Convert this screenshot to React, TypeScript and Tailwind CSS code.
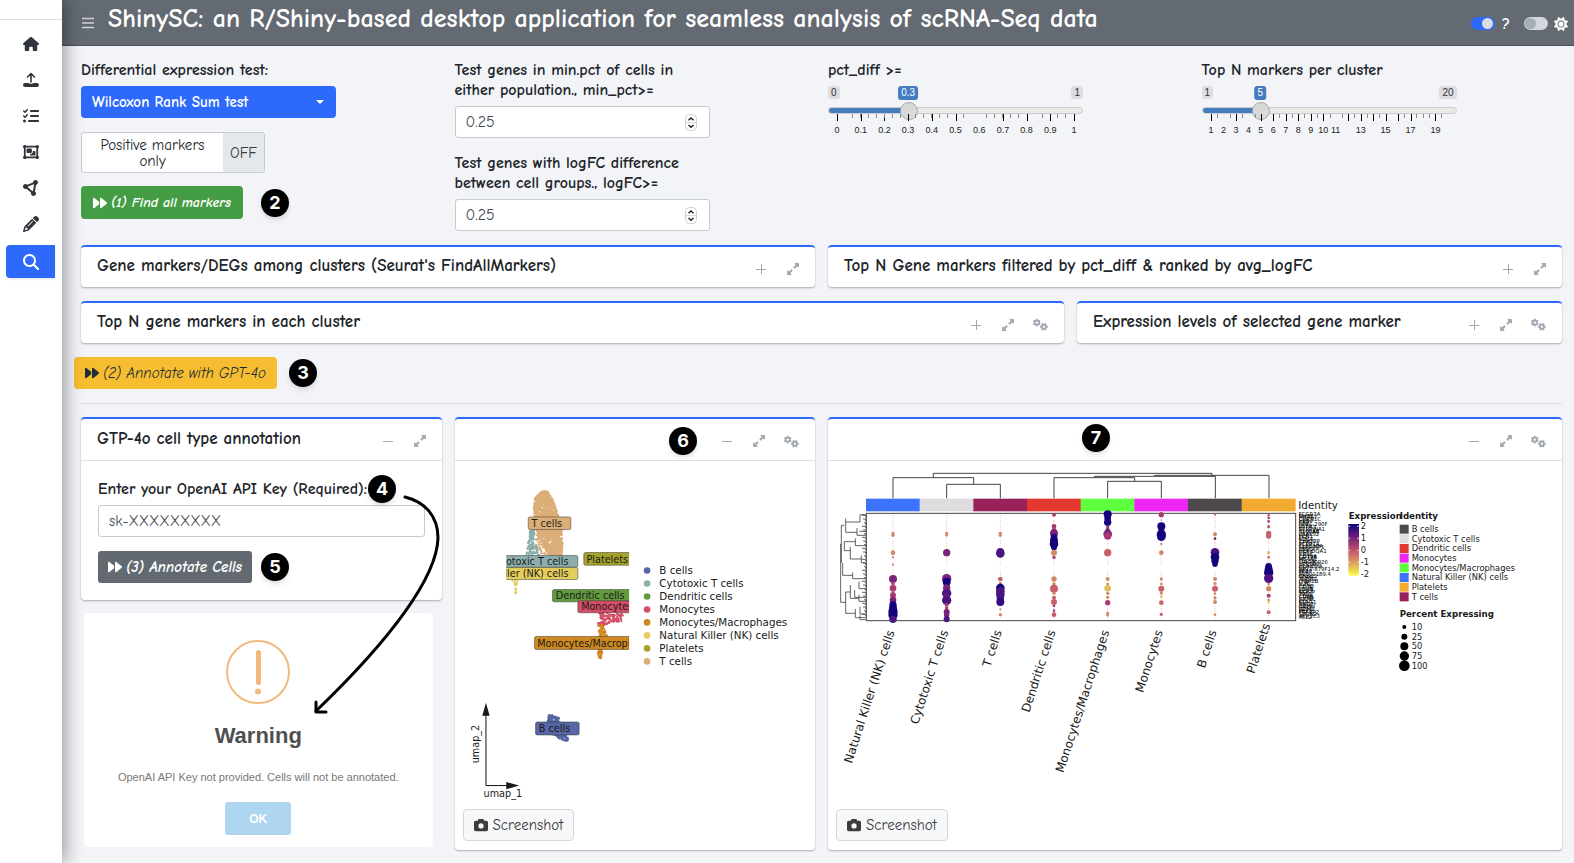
import type { ReactNode } from "react";
import {
  FaCamera,
  FaCircleNodes,
  FaForward,
  FaGears,
  FaHouse,
  FaListCheck,
  FaMagnifyingGlass,
  FaObjectGroup,
  FaPencil,
  FaSun,
  FaUpRightAndDownLeftFromCenter,
} from "react-icons/fa6";

const plotFont = '"DejaVu Sans", Verdana, sans-serif';

function UploadIcon() {
  return (
    <svg viewBox="0 0 16 16" className="size-4" fill="none" stroke="currentColor" aria-hidden>
      <path d="M8 10V2M4.500 5 8 1.500l3.500 3.500" strokeWidth="1.600" strokeLinecap="round" strokeLinejoin="round" />
      <path d="M2 11h4.200v.8h3.600V11H14a1.500 1.500 0 0 1 0 4H2a1.500 1.500 0 0 1 0-4Z" fill="currentColor" stroke="none" />
    </svg>
  );
}

const navItems = [
  { label: "Home", icon: <FaHouse /> },
  { label: "Upload", icon: <UploadIcon /> },
  { label: "Quality control", icon: <FaListCheck /> },
  { label: "Clustering", icon: <FaObjectGroup /> },
  { label: "Network", icon: <FaCircleNodes /> },
  { label: "Edit", icon: <FaPencil /> },
  { label: "Markers", icon: <FaMagnifyingGlass />, active: true },
];

function Sidebar() {
  return (
    <aside className="relative z-10 w-[62px] shrink-0 bg-white shadow-[4px_0_16px_rgba(0,0,0,0.35)]">
      <div className="h-5 border-b border-[#dcdfe3]" />
      <nav className="mt-2 flex flex-col gap-1 pr-[7px] pl-[6px]">
        {navItems.map((item) => (
          <a
            key={item.label}
            href="#"
            aria-label={item.label}
            className={
              item.active
                ? "mt-px flex h-[33px] items-center justify-center rounded-l bg-[#2d69fb] text-white shadow"
                : "flex h-8 items-center justify-center text-[#2f353b]"
            }
          >
            {item.icon}
          </a>
        ))}
      </nav>
    </aside>
  );
}

function Header() {
  return (
    <header className="flex h-[46px] items-center border-b border-[#4c5258] bg-[#636a72] text-white">
      <button aria-label="Toggle menu" className="ml-5">
        <svg viewBox="0 0 12 12" className="size-3" stroke="#cfd2d6" strokeWidth="1.500" aria-hidden>
          <path d="M0 1.500h12M0 6h12M0 10.500h12" />
        </svg>
      </button>
      <h1 className="ml-[14px] pb-2 text-[26px] leading-8 font-bold whitespace-nowrap">
        ShinySC: an R/Shiny-based desktop application for seamless analysis of scRNA-Seq data
      </h1>
      <div className="mt-[2px] mr-[6px] ml-auto flex items-center gap-[6px]">
        <input
          type="checkbox"
          aria-label="Help"
          defaultChecked
          className="h-[13px] w-6 appearance-none rounded-full bg-[#2d69fb] before:ml-[11px] before:block before:size-[11px] before:translate-y-px before:rounded-full before:bg-[#dadde3]"
        />
        <span className="w-[10px] text-center text-base leading-5 font-bold">?</span>
        <input
          type="checkbox"
          aria-label="Dark mode"
          className="ml-[7px] h-[13px] w-6 appearance-none rounded-full bg-[#d3d6da] before:ml-px before:block before:size-[11px] before:translate-y-px before:rounded-full before:bg-[#a7adb7]"
        />
        <FaSun className="size-[14px]" />
      </div>
    </header>
  );
}

function Badge({ children, className = "" }: { children: ReactNode; className?: string }) {
  return (
    <span
      className={`flex size-7 shrink-0 items-center justify-center rounded-full bg-black font-['Inter','Liberation_Sans',sans-serif] text-lg leading-none font-bold text-white shadow-md ${className}`}
    >
      {children}
    </span>
  );
}

function Card({
  title,
  gears,
  open,
  mark,
  className = "",
  children,
}: {
  title?: string;
  gears?: boolean;
  open?: boolean;
  mark?: ReactNode;
  className?: string;
  children?: ReactNode;
}) {
  return (
    <section className={`rounded border-t-2 border-[#2d69fb] bg-white shadow-[0_1px_2px_rgba(0,0,0,0.3)] ${className}`}>
      <div className={open ? "relative flex h-[42px] items-center border-b border-[#dcdee2]" : "flex h-10 items-center"}>
        {title && <h2 className="ml-4 pb-[2px] text-[17px] leading-5 font-bold whitespace-nowrap">{title}</h2>}
        <div className={`ml-auto flex items-center pt-[3px] text-[#a3a9b3] ${gears ? "pr-2" : "pr-[6px]"}`}>
          {mark}
          <button aria-label={open ? "Collapse" : "Expand"} className="flex w-8 justify-center">
            <svg viewBox="0 0 10 10" className="size-[10px]" stroke="currentColor" strokeWidth="1" aria-hidden>
              <path d={open ? "M0 5.500h10" : "M0 5.500h10M5.500 0v10"} />
            </svg>
          </button>
          <button aria-label="Full screen" className="flex w-8 justify-center">
            <FaUpRightAndDownLeftFromCenter className="size-3" />
          </button>
          {gears && (
            <button aria-label="Settings" className="flex w-8 justify-center">
              <FaGears className="size-[15px]" />
            </button>
          )}
        </div>
      </div>
      {children}
    </section>
  );
}

function NumberField({ id, label, value }: { id: string; label: string; value: string }) {
  return (
    <div className="w-[255px]">
      <label htmlFor={id} className="block text-base leading-5 font-bold">
        {label}
      </label>
      <div className="mt-[6px] flex h-8 items-center rounded-[3px] border border-[#c6cbd2] bg-white pr-3 pl-[10px]">
        <input
          id={id}
          type="number"
          step="0.01"
          defaultValue={value}
          className="min-w-0 flex-1 appearance-none text-base text-[#444a52] outline-none [-moz-appearance:textfield] [&::-webkit-inner-spin-button]:appearance-none"
        />
        <svg viewBox="0 0 12 17" className="h-[17px] w-3" fill="none" aria-hidden>
          <rect x=".5" y=".5" width="11" height="16" rx="4" stroke="#cfcfcf" fill="#fff" />
          <path d="M1 8.500h10" stroke="#d8d8d8" />
          <path d="m3.500 6.200 2.500-2.200 2.500 2.200M3.500 11l2.500 2.200 2.500-2.200" stroke="#222" strokeWidth="1.400" />
        </svg>
      </div>
    </div>
  );
}

type Tick = { at: number; label?: string; big?: boolean };

const pctTicks: Tick[] = [
  ...Array.from({ length: 11 }, (_, i) => ({ at: 9 + i * 23.7, label: String(i / 10), big: i !== 6 })),
  ...[24, 32, 40, 48, 56, 64, 72, 87, 95, 103, 111, 119, 135, 158, 166, 174, 182, 190, 214, 229, 237].map((at) => ({ at })),
];

const topTicks: Tick[] = [
  ...Array.from({ length: 19 }, (_, i) => ({
    at: 9 + i * 12.47,
    label: i < 11 || i % 2 === 0 ? String(i + 1) : undefined,
    big: [0, 2, 4, 5, 6, 7, 8, 9, 11, 12, 13, 14, 15, 16, 18].includes(i),
  })),
  ...[15, 28, 40, 53, 77, 90, 102, 115, 128, 140, 152, 165, 177, 202, 214, 227, 239].map((at) => ({ at })),
];

function Slider({
  id,
  label,
  min,
  max,
  step,
  value,
  ticks,
}: {
  id: string;
  label: string;
  min: number;
  max: number;
  step: number;
  value: number;
  ticks: Tick[];
}) {
  // the thumb is 18px wide, so its centre travels over 255 - 18 pixels
  const center = 9 + ((value - min) / (max - min)) * 237;
  return (
    <div className="w-[255px]">
      <label htmlFor={id} className="block text-base leading-5 font-bold">
        {label}
      </label>
      <div className="relative mt-[6px] flex justify-between font-['Liberation_Sans',Arial,sans-serif] text-[10px] leading-[13px] text-[#333]">
        <span className="rounded-[3px] bg-[#dcdde0] px-[3px]">{min}</span>
        <span className="rounded-[3px] bg-[#dcdde0] px-[3px]">{max}</span>
        <span
          className="absolute top-0 -translate-x-1/2 rounded-[3px] bg-[#457cbf] px-[3px] leading-[14px] text-white"
          style={{ left: center }}
        >
          {value}
        </span>
      </div>
      <input
        id={id}
        type="range"
        min={min}
        max={max}
        step={step}
        defaultValue={value}
        style={{ backgroundImage: `linear-gradient(to right, #457cbf ${center}px, #e9e9e7 ${center}px)` }}
        className="mt-2 block h-[7px] w-full appearance-none rounded-full border border-[#cbcbcb] [&::-webkit-slider-thumb]:size-[18px] [&::-webkit-slider-thumb]:appearance-none [&::-webkit-slider-thumb]:rounded-full [&::-webkit-slider-thumb]:border [&::-webkit-slider-thumb]:border-[#aaa] [&::-webkit-slider-thumb]:bg-[#d9d9d9]"
      />
      <svg viewBox="0 0 255 22" className="h-[22px] w-full overflow-visible" aria-hidden>
        {ticks.map((t, i) => (
          <g key={i}>
            <path
              d={`M${Math.round(t.at) + 0.5} 0v${t.big ? 7 : 4}`}
              stroke={t.big ? "#000" : "#888"}
              opacity={t.label && !t.big ? 0 : 1}
            />
            {t.label && (
              <text x={t.at} y="19" textAnchor="middle" fontSize="9" fontFamily='"Liberation Sans", Arial, sans-serif' fill="#222">
                {t.label}
              </text>
            )}
          </g>
        ))}
      </svg>
    </div>
  );
}

function Controls() {
  return (
    <div className="grid grid-cols-4 gap-x-[13px]">
      <div>
        <label htmlFor="test" className="block text-base leading-5 font-bold">
          Differential expression test:
        </label>
        <div className="relative mt-[6px] w-[255px]">
          <select
            id="test"
            className="block h-8 w-full appearance-none rounded bg-[#2d69fb] pl-[11px] text-[15px] font-bold text-white"
          >
            <option>Wilcoxon Rank Sum test</option>
          </select>
          <svg viewBox="0 0 8 4" className="pointer-events-none absolute top-[14px] right-3 h-1 w-2" fill="#fff" aria-hidden>
            <path d="M0 0h8L4 4Z" />
          </svg>
        </div>
        <button
          role="switch"
          aria-checked="false"
          className="mt-[14px] flex h-[41px] w-[184px] overflow-hidden rounded-[3px] border border-[#c6cbd2] bg-white text-[15px] leading-4"
        >
          <span className="flex-1 self-center px-4">Positive markers only</span>
          <span className="flex w-[41px] items-center justify-center self-stretch bg-[#e4e8eb] text-[#333a44]">OFF</span>
        </button>
        <div className="mt-[13px] flex items-center gap-[18px]">
          <button className="flex h-[33px] w-[162px] items-center justify-center gap-1 rounded bg-[#449d44] text-sm font-bold whitespace-nowrap text-white italic">
            <FaForward className="size-[14px]" />
            (1) Find all markers
          </button>
          <Badge>2</Badge>
        </div>
      </div>
      <div className="flex flex-col gap-[15px]">
        <NumberField id="min-pct" label="Test genes in min.pct of cells in either population., min_pct>=" value="0.25" />
        <NumberField id="logfc" label="Test genes with logFC difference between cell groups., logFC>=" value="0.25" />
      </div>
      <Slider id="pct-diff" label="pct_diff >=" min={0} max={1} step={0.1} value={0.3} ticks={pctTicks} />
      <Slider id="top-n" label="Top N markers per cluster" min={1} max={20} step={1} value={5} ticks={topTicks} />
    </div>
  );
}

// Each row is [y, xMin, xMax]; points are spread between neighbouring rows.
type Outline = [number, number, number][];

function scatter(seed: number, count: number, rows: Outline) {
  let s = seed;
  const rand = () => {
    s = (s * 16807) % 2147483647;
    return s / 2147483647;
  };
  const top = rows[0][0];
  const bottom = rows[rows.length - 1][0];
  const points: [number, number][] = [];
  while (points.length < count) {
    const y = top + rand() * (bottom - top);
    const i = Math.max(1, rows.findIndex((r) => r[0] >= y));
    const a = rows[i - 1];
    const b = rows[i];
    const k = (y - a[0]) / (b[0] - a[0]);
    const lo = a[1] + (b[1] - a[1]) * k;
    const hi = a[2] + (b[2] - a[2]) * k;
    points.push([Math.round(lo + rand() * (hi - lo)), Math.round(y)]);
  }
  return points;
}

const clouds: { color: string; count: number; seed: number; rows: Outline }[] = [
  {
    color: "#dbae78",
    count: 1500,
    seed: 11,
    rows: [[245, 276, 294], [262, 254, 304], [290, 250, 316], [320, 251, 326], [360, 258, 334], [400, 276, 338], [436, 297, 335]],
  },
  { color: "#dbae78", count: 40, seed: 5, rows: [[365, 255, 275], [400, 258, 282], [436, 262, 300]] },
  { color: "#8caeac", count: 120, seed: 7, rows: [[360, 241, 252], [390, 233, 254], [415, 231, 262], [436, 228, 266]] },
  { color: "#e5cd5b", count: 18, seed: 3, rows: [[512, 186, 208], [520, 194, 199], [560, 194, 199]] },
  { color: "#d34e66", count: 130, seed: 9, rows: [[610, 446, 521], [634, 445, 517], [640, 444, 478], [648, 445, 458]] },
  { color: "#cf891f", count: 130, seed: 13, rows: [[645, 446, 457], [678, 445, 472], [718, 441, 459], [745, 447, 453]] },
  { color: "#5767a4", count: 260, seed: 17, rows: [[917, 296, 306], [925, 293, 326], [950, 293, 330], [977, 308, 345], [985, 325, 353], [993, 342, 354]] },
];

const umapLabels = [
  { text: "T cells", x: 234, y: 321, w: 128, h: 38, tx: 244, color: "#dbae78" },
  { text: "Cytotoxic T cells", x: 120, y: 437, w: 263, h: 35, tx: 355, end: true, color: "#8caeac" },
  { text: "Natural Killer (NK) cells", x: 100, y: 473, w: 283, h: 36, tx: 355, end: true, color: "#e5cd5b" },
  { text: "Platelets", x: 401, y: 428, w: 160, h: 38, tx: 409, color: "#a6a32a" },
  { text: "Dendritic cells", x: 307, y: 539, w: 240, h: 37, tx: 317, color: "#619b3e" },
  { text: "Monocytes", x: 383, y: 573, w: 180, h: 36, tx: 393, color: "#d34e66" },
  { text: "Monocytes/Macrophages", x: 253, y: 680, w: 400, h: 39, tx: 261, color: "#cf891f" },
  { text: "B cells", x: 256, y: 937, w: 131, h: 39, tx: 266, color: "#5767a4" },
];

const umapLegend = [
  ["B cells", "#5767a4"],
  ["Cytotoxic T cells", "#8caeac"],
  ["Dendritic cells", "#619b3e"],
  ["Monocytes", "#d34e66"],
  ["Monocytes/Macrophages", "#cf891f"],
  ["Natural Killer (NK) cells", "#e5cd5b"],
  ["Platelets", "#a6a32a"],
  ["T cells", "#dbae78"],
];

function UmapPlot() {
  return (
    <svg viewBox="14 153 1083 1020" preserveAspectRatio="xMinYMin meet" className="h-[340px] w-full" fontFamily={plotFont} fill="#1a1a1a">
      <clipPath id="umap-area">
        <rect x="168" y="180" width="369" height="840" />
      </clipPath>
      <g clipPath="url(#umap-area)">
        {clouds.map((cloud) =>
          scatter(cloud.seed, cloud.count, cloud.rows).map(([x, y], i) => (
            <circle key={`${cloud.seed}-${i}`} cx={x} cy={y} r="3.400" fill={cloud.color} />
          )),
        )}
        {umapLabels.map((l) => (
          <g key={l.text}>
            <rect x={l.x} y={l.y} width={l.w} height={l.h} rx="5" fill={l.color} stroke="#333" strokeOpacity=".75" strokeWidth="2" />
            <text x={l.tx} y={l.y + l.h / 2 + 11} textAnchor={l.end ? "end" : "start"} fontSize="29">
              {l.text}
            </text>
          </g>
        ))}
      </g>
      {umapLegend.map(([name, color], i) => (
        <g key={name}>
          <circle cx="591" cy={482 + i * 39} r="10" fill={color} />
          <text x="628" y={493 + i * 39} fontSize="31">
            {name}
          </text>
        </g>
      ))}
      <path d="M107 900v228h78" fill="none" stroke="#111" strokeWidth="3" />
      <path d="m107 879 11 39H96ZM207 1128l-39 11v-22Z" />
      <text x="100" y="1163" fontSize="29">
        umap_1
      </text>
      <text transform="translate(87 1061) rotate(-90)" fontSize="29">
        umap_2
      </text>
    </svg>
  );
}

const N = "#15047d";
const V = "#4a1580";
const P = "#7a2378";
const M = "#a83a72";
const R = "#c6606a";
const S = "#d28a64";
const Y = "#e2bd5c";

// [y, radius, colour] of the dots in each column
const dotColumns: { name: string; color: string; x: number; labelY: number; dots: [number, number, string][] }[] = [
  {
    name: "Natural Killer (NK) cells", color: "#3d72fb", x: 219, labelY: 665,
    dots: [[370, 5, S], [376, 5, S], [428, 7, S], [442, 3, R], [464, 3, R], [507, 12, P], [521, 5, M], [535, 10, M], [546, 5, R], [556, 9, M], [570, 10, P], [585, 11, N], [595, 12, N], [605, 14, N], [615, 14, N], [628, 11, V]],
  },
  {
    name: "Cytotoxic T cells", color: "#dedcde", x: 380, labelY: 665,
    dots: [[370, 5, S], [376, 4, S], [428, 11, P], [506, 14, P], [515, 12, N], [524, 9, N], [534, 11, P], [550, 14, V], [562, 9, P], [571, 14, V], [584, 6, M], [594, 5, M], [606, 9, P], [615, 8, P], [628, 9, V]],
  },
  {
    name: "T cells", color: "#99215c", x: 541, labelY: 665,
    dots: [[370, 5, S], [376, 5, S], [425, 11, V], [430, 13, V], [507, 7, R], [520, 4, R], [534, 13, N], [544, 13, V], [554, 13, V], [565, 11, V], [576, 12, "#330a7d"], [598, 3, S], [614, 5, S]],
  },
  {
    name: "Dendritic cells", color: "#e3382f", x: 702, labelY: 665,
    dots: [[314, 6, M], [349, 7, M], [360, 7, M], [370, 12, P], [382, 10, N], [392, 12, N], [402, 13, N], [412, 9, N], [428, 9, S], [442, 5, M], [507, 8, S], [522, 5, S], [536, 12, R], [550, 5, S], [563, 6, R], [576, 9, R], [588, 4, M], [602, 4, M], [614, 7, R]],
  },
  {
    name: "Monocytes/Macrophages", color: "#5eff3f", x: 863, labelY: 665,
    dots: [[313, 12, N], [325, 10, N], [337, 11, N], [351, 5, M], [361, 7, P], [372, 13, P], [378, 11, M], [428, 11, R], [507, 6, S], [522, 4, S], [535, 10, Y], [550, 5, S], [562, 5, S], [578, 8, M], [610, 5, S], [616, 4, S]],
  },
  {
    name: "Monocytes", color: "#ec27f4", x: 1024, labelY: 665,
    dots: [[314, 8, M], [330, 2, R], [349, 12, N], [360, 9, N], [374, 14, N], [380, 13, N], [402, 3, R], [428, 7, S], [507, 5, S], [522, 4, S], [536, 9, R], [549, 5, S], [560, 4, Y], [578, 7, R], [613, 5, R]],
  },
  {
    name: "B cells", color: "#4e494c", x: 1185, labelY: 665,
    dots: [[314, 3, R], [373, 6, S], [386, 4, P], [427, 13, V], [441, 13, N], [452, 11, N], [463, 8, N], [507, 6, S], [521, 5, S], [536, 9, R], [551, 4, S], [564, 5, S], [576, 6, S], [614, 4, S]],
  },
  {
    name: "Platelets", color: "#f2ab30", x: 1346, labelY: 645,
    dots: [[316, 4, R], [324, 4, M], [334, 4, M], [350, 5, R], [370, 8, R], [378, 8, R], [428, 5, Y], [442, 4, R], [469, 10, N], [478, 12, N], [488, 14, N], [505, 14, V], [522, 4, S], [536, 8, S], [557, 6, M], [570, 4, S], [577, 4, "#f1e24d"], [607, 6, R]],
  },
];

const genes = [
  "FCGR3A", "RHOC", "MS4A7", "CDKN1C", "HES4", "CKB", "RP11-290F", "LST1", "IFITM3", "SERPINA1", "S100A8", "S100A9",
  "LGALS2", "FCN1", "LYZ", "CD14", "TYROBP", "GPX1", "FCER1A", "CLEC10A", "SERPINF1", "ENHO", "HLA-DQA1", "CST3",
  "CD1C", "CD79A", "CD79B", "MS4A1", "TCL1A", "LINC00926", "VPREB3", "HLA-DRA", "CD74", "RP11-879F14.2", "PPBP", "PF4",
  "AP001189.4", "GNG11", "SDPR", "TUBB1", "ITGA2B", "LTB", "IL7R", "CD3D", "CD3E", "LDHB", "CCR7", "NOSIP", "TPT1",
  "CD8A", "CD8B", "GZMK", "CCL5", "KLRG1", "NKG7", "GZMH", "GNLY", "GZMB", "PRF1", "FGFBP2", "SPON2", "AKR1C3", "XCL2",
];

const identityLegend = [
  ["B cells", "#4e494c"],
  ["Cytotoxic T cells", "#dedcde"],
  ["Dendritic cells", "#e3382f"],
  ["Monocytes", "#ec27f4"],
  ["Monocytes/Macrophages", "#5eff3f"],
  ["Natural Killer (NK) cells", "#3d72fb"],
  ["Platelets", "#f2ab30"],
  ["T cells", "#99215c"],
];

function DotPlot() {
  return (
    <svg viewBox="24 153 2202 1020" preserveAspectRatio="xMinYMin meet" className="h-[340px] w-full" fontFamily={plotFont} fill="#1a1a1a">
      <g fill="none" stroke="#444" strokeWidth="3">
        <path d="M219 265v-62h242v20M380 265v-42h161v42M340 203v-13h836v9M702 265v-62h242v11M863 265v-51h161v51M823 203v-4h363v66M1004 198v-2h343v69" />
        <path d="M61 403h4M73 346H64v113M68 459v37h30M62 403v174h15M77 325v42h34M120 314v22H77M120 314h17M111 354v22h26M118 364h19M106 385v22h31M106 395H73v27h18M91 411v36h33M124 436v22h12M98 487v19h38M77 546v64h29M77 546h14M91 525v40h26M117 515v21h20M104 540v22h33M117 554v20h20M106 597v26h31M120 590v22h16M120 616v13h17" strokeWidth="2.500" />
        {Array.from({ length: 28 }, (_, i) => (
          <path key={i} d={`M${126 + (i % 3) * 3} ${316 + i * 11}H137v6`} strokeWidth="2.500" />
        ))}
      </g>
      {dotColumns.map((col) => (
        <g key={col.name}>
          <rect x={col.x - 81} y="266" width="162" height="38" fill={col.color} />
          <path d={`M${col.x} 316v152M${col.x} 482v146`} stroke="#e4a59a" strokeWidth="3" strokeDasharray="2 5" />
        </g>
      ))}
      <rect x="139" y="310" width="1288" height="322" fill="none" stroke="#444" strokeWidth="3" />
      {dotColumns.map((col) => (
        <g key={col.name}>
          {col.dots.map(([y, r, color], i) => (
            <circle key={i} cx={col.x} cy={y} r={r} fill={color} />
          ))}
          <text transform={`translate(${col.x + 5} ${col.labelY}) rotate(-72)`} textAnchor="end" fontSize="36">
            {col.name}
          </text>
        </g>
      ))}
      <text x="1435" y="297" fontSize="31">
        Identity
      </text>
      {genes.map((gene, i) => (
        <text key={gene} x="1436" y={318 + i * 5} fontSize="16" fill="#000">
          {gene}
        </text>
      ))}
      <linearGradient id="expression" x1="0" y1="0" x2="0" y2="1">
        <stop offset="0" stopColor="#12057e" />
        <stop offset=".25" stopColor="#6d1f7b" />
        <stop offset=".5" stopColor="#c0506d" />
        <stop offset=".75" stopColor="#dc9f5e" />
        <stop offset="1" stopColor="#fbfb4a" />
      </linearGradient>
      <text x="1586" y="327" fontSize="26" fontWeight="bold">
        Expression
      </text>
      <rect x="1585" y="342" width="32" height="155" fill="url(#expression)" />
      {["2", "1", "0", "-1", "-2"].map((n, i) => (
        <g key={n}>
          <path d={`M1585 ${349 + i * 36}h6M1611 ${349 + i * 36}h6`} stroke="#fff" strokeWidth="2" />
          <text x="1622" y={358 + i * 36} fontSize="25">
            {n}
          </text>
        </g>
      ))}
      <text x="1739" y="327" fontSize="26" fontWeight="bold">
        Identity
      </text>
      {identityLegend.map(([name, color], i) => (
        <g key={name}>
          <rect x="1739" y={344 + i * 29} width="27" height="27" fill={color} />
          <text x="1775" y={366 + i * 29} fontSize="25">
            {name}
          </text>
        </g>
      ))}
      <text x="1739" y="621" fontSize="26" fontWeight="bold">
        Percent Expressing
      </text>
      {[
        [10, 6],
        [25, 9],
        [50, 12],
        [75, 14],
        [100, 16],
      ].map(([n, r], i) => (
        <g key={n}>
          <circle cx="1753" cy={651 + i * 29} r={r} fill="#000" />
          <text x="1775" y={660 + i * 29} fontSize="25">
            {n}
          </text>
        </g>
      ))}
    </svg>
  );
}

function ScreenshotButton() {
  return (
    <button className="mt-2 mb-[9px] ml-2 flex h-8 items-center gap-[5px] rounded border border-[#d5d8db] bg-[#f7f8fa] px-[10px] text-[15px] text-[#3c3c3c]">
      <FaCamera className="size-[14px]" />
      Screenshot
    </button>
  );
}

function WarningBox() {
  return (
    <div
      role="alert"
      className="mt-[13px] mr-[9px] ml-[3px] flex h-[234px] flex-col items-center rounded-sm bg-white font-['Liberation_Sans',Arial,sans-serif]"
    >
      <svg viewBox="0 0 64 64" className="mt-[27px] size-16" fill="none" stroke="#f2b87c" aria-hidden>
        <circle cx="32" cy="32" r="31" strokeWidth="2" />
        <path d="M32.500 12.500v30" strokeWidth="5" strokeLinecap="round" />
        <circle cx="32" cy="51.500" r="3" fill="#f2b87c" stroke="none" />
      </svg>
      <h3 className="mt-5 text-[22px] leading-6 font-bold text-[#4f4f4f]">Warning</h3>
      <p className="mt-[21px] text-[11px] leading-4 text-[#777]">OpenAI API Key not provided. Cells will not be annotated.</p>
      <button className="mt-[17px] h-[33px] w-[66px] rounded-[3px] bg-[#aed6f1] text-xs font-bold text-white">OK</button>
    </div>
  );
}

function AnnotationPanel() {
  return (
    <div className="relative col-span-3">
      <Card title="GTP-4o cell type annotation" open>
        <form className="px-[17px] pt-[18px] pb-[17px]">
          <div className="flex items-center gap-px">
            <label htmlFor="api-key" className="text-base leading-5 font-bold whitespace-nowrap">
              Enter your OpenAI API Key (Required):
            </label>
            <Badge className="-my-1">4</Badge>
          </div>
          <input
            id="api-key"
            type="text"
            defaultValue="sk-XXXXXXXXX"
            className="mt-[6px] block h-8 w-full rounded-[3px] border border-[#c6cbd2] bg-white px-[10px] text-[15px] text-[#444a52]"
          />
          <div className="mt-[14px] flex items-center gap-[9px]">
            <button
              type="button"
              className="flex h-8 w-[154px] items-center justify-center gap-1 rounded-[3px] bg-[#626971] text-[15px] font-bold whitespace-nowrap text-white italic"
            >
              <FaForward className="size-[14px]" />
              (3) Annotate Cells
            </button>
            <Badge>5</Badge>
          </div>
        </form>
      </Card>
      <WarningBox />
      <svg
        viewBox="0 0 361 300"
        className="pointer-events-none absolute top-0 left-0 h-[300px] w-[361px]"
        fill="none"
        stroke="#000"
        strokeWidth="3"
        strokeLinecap="round"
        strokeLinejoin="round"
        aria-hidden
      >
        <path d="M324 80C344 85 357 99 357 121C356 160 310 222 235 294" />
        <path d="M235 285v10h10" />
      </svg>
    </div>
  );
}

export default function App() {
  return (
    <div className="flex min-h-screen bg-[#f3f4f8] font-['Comic_Sans_MS','Comic_Neue','Noto_Sans',sans-serif] text-[#212529]">
      <Sidebar />
      <div className="min-w-0 flex-1">
        <Header />
        <main className="pt-[14px] pr-3 pl-[19px]">
          <Controls />
          <div className="mt-[14px] grid grid-cols-12 gap-x-[13px] gap-y-[14px]">
            <Card title="Gene markers/DEGs among clusters (Seurat's FindAllMarkers)" className="col-span-6" />
            <Card title="Top N Gene markers filtered by pct_diff & ranked by avg_logFC" className="col-span-6" />
            <Card title="Top N gene markers in each cluster" gears className="col-span-8" />
            <Card title="Expression levels of selected gene marker" gears className="col-span-4" />
          </div>
          <div className="mt-[14px] -ml-[7px] flex items-center gap-3">
            <button className="flex h-8 w-[203px] items-center justify-center gap-1 rounded bg-[#f7bd30] text-[15px] whitespace-nowrap text-[#212d36] italic">
              <FaForward className="size-[14px]" />
              (2) Annotate with GPT-4o
            </button>
            <Badge>3</Badge>
          </div>
          <hr className="mt-[14px] mb-[13px] border-[#dcdee2]" />
          <div className="grid grid-cols-12 items-start gap-x-[13px]">
            <AnnotationPanel />
            <Card open gears mark={<Badge className="mr-[14px]">6</Badge>} className="col-span-3">
              <UmapPlot />
              <ScreenshotButton />
            </Card>
            <Card open gears mark={<Badge className="absolute top-[5px] left-[254px]">7</Badge>} className="col-span-6">
              <DotPlot />
              <ScreenshotButton />
            </Card>
          </div>
        </main>
      </div>
    </div>
  );
}
